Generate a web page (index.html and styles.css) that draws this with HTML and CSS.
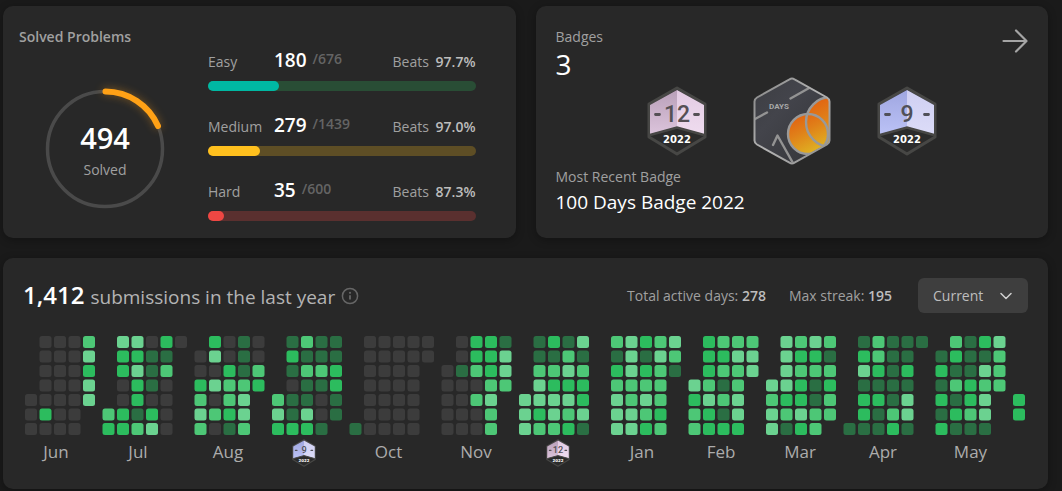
FILE: index.html
```html
<!DOCTYPE html>
<html lang="en">
<head>
<meta charset="utf-8">
<title>Profile</title>
<link rel="stylesheet" href="styles.css">
</head>
<body>
<svg class="defs" aria-hidden="true">
  <defs>
    <linearGradient id="pinkL" x1="0" y1="0" x2="0" y2="1"><stop offset="0" stop-color="#b9a0b9"/><stop offset="1" stop-color="#dcc4dc"/></linearGradient>
    <linearGradient id="pinkR" x1="0" y1="0" x2="0" y2="1"><stop offset="0" stop-color="#e3cbe3"/><stop offset="1" stop-color="#efdcef"/></linearGradient>
    <linearGradient id="blueL" x1="0" y1="0" x2="0" y2="1"><stop offset="0" stop-color="#9fa6e0"/><stop offset="1" stop-color="#bbc2f6"/></linearGradient>
    <linearGradient id="blueR" x1="0" y1="0" x2="0" y2="1"><stop offset="0" stop-color="#cfcff2"/><stop offset="1" stop-color="#dcdcf8"/></linearGradient>
    <linearGradient id="steel" x1="0" y1="0" x2="1" y2="1"><stop offset="0" stop-color="#3d3e43"/><stop offset=".35" stop-color="#43444b"/><stop offset="1" stop-color="#333438"/></linearGradient>
    <linearGradient id="flame" x1="0" y1="0" x2=".5" y2="1"><stop offset="0" stop-color="#e2590f"/><stop offset=".5" stop-color="#e08019"/><stop offset="1" stop-color="#dfb022"/></linearGradient>
    <linearGradient id="rim" x1="0" y1="0" x2="1" y2="1"><stop offset="0" stop-color="#858585"/><stop offset=".5" stop-color="#b4b4b4"/><stop offset="1" stop-color="#8a8a8a"/></linearGradient>
    <clipPath id="hexClip"><path d="M39 2 76 22V66L39 86 2 66V22Z"/></clipPath>
    <symbol id="badge-dec" viewBox="0 0 60 70">
      <path d="M30 2 58 18V51L30 68 2 51V18Z" fill="#2b2b2b" stroke="#474745" stroke-width="3" stroke-linejoin="round"/>
      <path d="M30 4 3 19V48.500L30 41Z" fill="url(#pinkL)"/>
      <path d="M30 4 57 19V48.500L30 41Z" fill="url(#pinkR)"/>
      <path d="M3 49 30 41.500 57 49" fill="none" stroke="#474745" stroke-width="2.500"/>
      <path d="M8.500 28.500H12.500M47.500 28.500H51.500" stroke="#555055" stroke-width="2.800" stroke-linecap="round"/>
      <text class="badge-num" x="30" y="36" fill="#555055">12</text>
      <text class="badge-year" x="30" y="56.500">2022</text>
    </symbol>
    <symbol id="badge-sep" viewBox="0 0 60 70">
      <path d="M30 2 58 18V51L30 68 2 51V18Z" fill="#2b2b2b" stroke="#474745" stroke-width="3" stroke-linejoin="round"/>
      <path d="M30 4 3 19V48.500L30 41Z" fill="url(#blueL)"/>
      <path d="M30 4 57 19V48.500L30 41Z" fill="url(#blueR)"/>
      <path d="M3 49 30 41.500 57 49" fill="none" stroke="#474745" stroke-width="2.500"/>
      <path d="M8.500 28.500H12.500M47.500 28.500H51.500" stroke="#505058" stroke-width="2.800" stroke-linecap="round"/>
      <text class="badge-num" x="30" y="36" fill="#505058">9</text>
      <text class="badge-year" x="30" y="56.500">2022</text>
    </symbol>
  </defs>
</svg>

<main class="page">
  <section class="card solved">
    <h2 class="solved-title">Solved Problems</h2>
    <div class="solved-body">
      <div class="ring">
        <svg class="ring-svg" viewBox="0 0 120 120" aria-hidden="true">
          <circle cx="60" cy="60" r="57.500" fill="none" stroke="#4a4a4a" stroke-width="3.500"/>
          <path class="ring-arc" d="M60.500 2.500A57.500 57.500 0 0 1 113 37" fill="none" stroke="#ffa116" stroke-width="6" stroke-linecap="round"/>
        </svg>
        <div class="ring-text">
          <span class="ring-total">494</span>
          <span class="ring-label">Solved</span>
        </div>
      </div>
      <div class="levels">
        <div class="level easy">
          <div class="level-head"><span class="level-name">Easy</span><span class="level-count"><b>180</b><span class="level-of">/676</span></span><span class="beats">Beats <b>97.7%</b></span></div>
          <div class="track"><div class="fill" style="width:26.6%"></div></div>
        </div>
        <div class="level medium">
          <div class="level-head"><span class="level-name">Medium</span><span class="level-count"><b>279</b><span class="level-of">/1439</span></span><span class="beats">Beats <b>97.0%</b></span></div>
          <div class="track"><div class="fill" style="width:19.4%"></div></div>
        </div>
        <div class="level hard">
          <div class="level-head"><span class="level-name">Hard</span><span class="level-count"><b>35</b><span class="level-of">/600</span></span><span class="beats">Beats <b>87.3%</b></span></div>
          <div class="track"><div class="fill" style="width:5.8%"></div></div>
        </div>
      </div>
    </div>
  </section>

  <section class="card badges">
    <div class="badges-head">
      <div>
        <h2 class="badges-title">Badges</h2>
        <p class="badges-count">3</p>
      </div>
      <a class="more" href="#" aria-label="All badges">
        <svg class="more-icon" viewBox="0 0 26 24" aria-hidden="true"><path d="M1.500 12H24M14 1.500 24.500 12 14 22.500" fill="none" stroke="#a5a5a5" stroke-width="2.200" stroke-linecap="round" stroke-linejoin="round"/></svg>
      </a>
    </div>
    <div class="badge-row">
      <svg class="badge" role="img" aria-label="December 2022"><use href="#badge-dec"/></svg>
      <svg class="badge-large" viewBox="0 0 78 88" role="img" aria-label="100 Days 2022">
        <path d="M39 2 76 22V66L39 86 2 66V22Z" fill="url(#steel)"/>
        <g clip-path="url(#hexClip)">
          <circle cx="78" cy="45" r="25" fill="url(#flame)"/>
          <circle cx="55" cy="57" r="20" fill="url(#flame)"/>
          <circle cx="78" cy="45" r="25" fill="none" stroke="#999" stroke-width="2.400"/>
          <circle cx="55" cy="57" r="20" fill="none" stroke="#999" stroke-width="2.400"/>
          <path d="M2 42 14 35.500M37.500 21.500 57 10.500M20 68 24.500 58.500 40 86" fill="none" stroke="#939393" stroke-width="2.400" stroke-linecap="round" stroke-linejoin="round"/>
        </g>
        <path d="M36.500 2.300Q39 .8 41.500 2.300L74 20.500Q76.500 22 76.500 24.500V63.500Q76.500 66 74 67.500L41.500 85.700Q39 87.200 36.500 85.700L4 67.500Q1.500 66 1.500 63.500V24.500Q1.500 22 4 20.500Z" fill="none" stroke="url(#rim)" stroke-width="2"/>
        <text class="badge-days" x="26" y="32">DAYS</text>
      </svg>
      <svg class="badge" role="img" aria-label="September 2022"><use href="#badge-sep"/></svg>
    </div>
    <p class="recent-label">Most Recent Badge</p>
    <p class="recent-name">100 Days Badge 2022</p>
  </section>

  <section class="card activity">
    <header class="activity-head">
      <h2 class="activity-title"><b>1,412</b> <span>submissions in the last year</span>
        <svg class="info" viewBox="0 0 18 18" aria-hidden="true"><circle cx="9" cy="9" r="7.600" fill="none" stroke="#666" stroke-width="1.500"/><path d="M9 8.300V12.500" stroke="#666" stroke-width="1.800"/><circle cx="9" cy="5.800" r="1.100" fill="#666"/></svg>
      </h2>
      <div class="activity-side">
        <span class="stat">Total active days: <b>278</b></span>
        <span class="stat">Max streak: <b>195</b></span>
        <div class="picker">
          <select class="picker-select" aria-label="Period"><option>Current</option></select>
          <svg class="picker-arrow" viewBox="0 0 12 8" aria-hidden="true"><path d="M1 1.500 6 6.500 11 1.500" fill="none" stroke="#d0d0d0" stroke-width="1.500" stroke-linecap="round" stroke-linejoin="round"/></svg>
        </div>
      </div>
    </header>
    <svg class="heatmap" id="heatmap" viewBox="-4 0 2010 262" role="img" aria-label="Submissions per day"></svg>
  </section>
</main>
<script src="heatmap.js"></script>
</body>
</html>
```
FILE: styles.css
```css
* {
  box-sizing: border-box;
}

body {
  margin: 0;
  background: #1a1a1a;
  color: #a0a0a0;
  font-family: "Open Sans", "Noto Sans", sans-serif;
  font-size: 14px;
  line-height: 20px;
}

h2,
p {
  margin: 0;
  font-size: inherit;
  font-weight: 400;
}

b {
  font-weight: 600;
}

.defs {
  position: absolute;
  width: 0;
  height: 0;
}

.page {
  display: grid;
  grid-template-columns: 1fr 1fr;
  gap: 20px;
  padding: 6px 14px 2px 3px;
}

.card {
  min-width: 0;
  border-radius: 10px;
  background: #282828;
  box-shadow: 0 2px 8px rgba(0, 0, 0, 0.3);
}

.solved {
  padding: 21px 40px 17px 16px;
}

.solved-title {
  font-weight: 600;
}

.solved-body {
  display: flex;
  gap: 43px;
}

.ring {
  display: grid;
  flex: none;
  align-self: flex-end;
  margin: 0 0 12px 26px;
}

.ring-svg,
.ring-text {
  grid-area: 1 / 1;
}

.ring-svg {
  width: 120px;
  height: 120px;
  overflow: visible;
}

.ring-arc {
  filter: drop-shadow(0 0 4px rgba(255, 161, 22, 0.4));
}

.ring-text {
  display: flex;
  flex-direction: column;
  align-items: center;
  justify-content: center;
  padding-top: 4px;
}

.ring-total {
  color: #fff;
  font-size: 29px;
  font-weight: 600;
  line-height: 38px;
}

.ring-label {
  line-height: 26px;
}

.levels {
  display: flex;
  flex: 1;
  flex-direction: column;
  gap: 21px;
}

.level-head {
  display: grid;
  grid-template-columns: 66px 1fr auto;
  align-items: baseline;
  height: 28px;
  margin-bottom: 6px;
  line-height: 26px;
}

.level-count {
  display: flex;
  align-items: center;
  gap: 6px;
}

.level-count b {
  color: #fff;
  font-size: 19px;
}

.level-of {
  padding-bottom: 2px;
  color: #646464;
  font-weight: 600;
  line-height: 24px;
}

.beats b {
  margin-left: 3px;
  color: #bdbdbd;
}

.track {
  height: 10px;
  border-radius: 5px;
}

.fill {
  height: 100%;
  border-radius: 5px;
}

.easy .track {
  background: #294d35;
}

.easy .fill {
  background: #00b8a3;
}

.medium .track {
  background: #5e4e25;
}

.medium .fill {
  background: #ffc01e;
}

.hard .track {
  background: #5a302f;
}

.hard .fill {
  background: #ef4743;
}

.badges {
  padding: 21px 20px;
}

.badges-head {
  display: flex;
  justify-content: space-between;
}

.badges-count {
  margin-top: 4px;
  color: #fff;
  font-size: 28px;
  line-height: 26px;
}

.more {
  height: 24px;
  margin-top: 2px;
}

.more-icon {
  display: block;
  width: 26px;
  height: 24px;
}

.badge-row {
  display: flex;
  align-items: center;
  justify-content: center;
  gap: 46px;
}

.badge {
  width: 60px;
  height: 70px;
}

.badge-large {
  width: 78px;
  height: 88px;
}

.badge-num {
  font: 500 23px Roboto, sans-serif;
  text-anchor: middle;
}

.badge-year {
  fill: #fff;
  font: 700 10px "DejaVu Sans", sans-serif;
  text-anchor: middle;
}

.badge-days {
  fill: #a8a8a8;
  font: 700 8px Roboto, sans-serif;
  text-anchor: middle;
}

.recent-label {
  line-height: 24px;
}

.recent-name {
  color: #fff;
  font-size: 19px;
  line-height: 26px;
}

.activity {
  grid-column: 1 / -1;
  padding: 20px 20px 22px;
}

.activity-head {
  display: flex;
  align-items: center;
  justify-content: space-between;
  height: 35px;
  margin-bottom: 23px;
}

.activity-title {
  display: flex;
  align-items: baseline;
  gap: 6px;
  color: #b4b4b4;
  font-size: 19px;
  line-height: 35px;
}

.activity-title b {
  color: #fff;
  font-size: 24px;
}

.info {
  align-self: center;
  width: 18px;
  height: 18px;
}

.activity-side {
  display: flex;
  align-items: center;
  gap: 23px;
}

.stat b {
  color: #bdbdbd;
}

.picker {
  position: relative;
  margin-left: 3px;
}

.picker-select {
  display: block;
  width: 110px;
  height: 35px;
  padding: 0 15px;
  border: 0;
  border-radius: 6px;
  background: #3e3e3e;
  color: #bdbdbd;
  font: inherit;
  appearance: none;
}

.picker-arrow {
  position: absolute;
  top: 14px;
  right: 16px;
  width: 12px;
  height: 8px;
  pointer-events: none;
}

.heatmap {
  display: block;
  width: 100%;
}

.month-name {
  fill: #acacac;
  font-size: 34px;
  text-anchor: middle;
}

.l0 {
  fill: #3c3c3c;
}

.l1 {
  fill: #2a6e43;
}

.l2 {
  fill: #2cbc5e;
}

.l3 {
  fill: #4dc776;
}

.l4 {
  fill: #6bd290;
}
```
FILE: heatmap.js
```js
// One string per weekday; digits are intensity levels, dots are days outside the month.
const months = [
  { name: "Jun", at: 62, rows: [".0003", ".0004", ".0002", ".0004", "00004", "0200.", "0000."] },
  { name: "Jul", at: 71, rows: [".44020", ".2211.", ".2413.", ".0210.", ".0200.", "32120.", "22340."] },
  { name: "Aug", at: 67, rows: [".2010", "04010", "00213", "24332", "3034.", "4324.", "3013."] },
  { badge: "badge-sep", at: 64, rows: [".1311", ".2111", ".1332", ".0112", "31101", "41401", "2221."] },
  { name: "Oct", at: 78, rows: [".00000", ".00000", ".0000.", ".0000.", ".0000.", ".0000.", "10000."] },
  { name: "Nov", at: 69, rows: [".0221", ".0224", "01324", "00033", "0034.", "0003.", "0003."] },
  { badge: "badge-dec", at: 78, rows: [".1214.", ".1131.", ".3343.", ".4222.", "44442.", "42434.", "43321."] },
  { name: "Jan", at: 62, rows: ["34234", "14143", "24231", "3333.", "4343.", "4432.", "4423."] },
  { name: "Feb", at: 65, rows: [".2333", ".2244", ".2334", "4313.", "2434.", "3214.", "3222."] },
  { name: "Mar", at: 68, rows: [".4343", ".4221", ".4333", "44212", "32213", "43433", "4123."] },
  { name: "Apr", at: 79, rows: [".13111", ".2311.", ".4212.", ".1111.", ".2214.", ".2134.", "11121."] },
  { name: "May", at: 70, rows: [".3124", "12113", "21143", "13233", "2124.", "1234.", "2111."] },
  { rows: [".", ".", ".", ".", "2", "2", "."] }
];

const PITCH = 29;
const CELL = 24;
const MONTH_GAP = 10;

let x = 0;
let out = "";
for (const m of months) {
  m.rows.forEach((row, r) => {
    [...row].forEach((level, c) => {
      if (level === ".") return;
      out += `<rect class="l${level}" x="${x + c * PITCH}" y="${r * PITCH}" width="${CELL}" height="${CELL}" rx="5"/>`;
    });
  });
  if (m.name) out += `<text class="month-name" x="${x + m.at}" y="244">${m.name}</text>`;
  if (m.badge) out += `<use href="#${m.badge}" x="${x + m.at - 26}" y="206" width="52" height="56"/>`;
  x += m.rows[0].length * PITCH + MONTH_GAP;
}
document.getElementById("heatmap").innerHTML = out;
```
